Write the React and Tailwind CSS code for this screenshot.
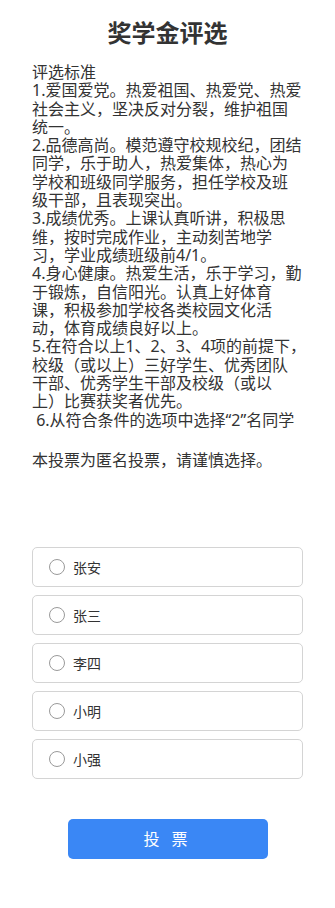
import React from "react";

const lines = [
  "评选标准",
  "1.爱国爱党。热爱祖国、热爱党、热爱",
  "社会主义，坚决反对分裂，维护祖国",
  "统一。",
  "2.品德高尚。模范遵守校规校纪，团结",
  "同学，乐于助人，热爱集体，热心为",
  "学校和班级同学服务，担任学校及班",
  "级干部，且表现突出。",
  "3.成绩优秀。上课认真听讲，积极思",
  "维，按时完成作业，主动刻苦地学",
  "习，学业成绩班级前4/1。",
  "4.身心健康。热爱生活，乐于学习，勤",
  "于锻炼，自信阳光。认真上好体育",
  "课，积极参加学校各类校园文化活",
  "动，体育成绩良好以上。",
  "5.在符合以上1、2、3、4项的前提下，",
  "校级（或以上）三好学生、优秀团队",
  "干部、优秀学生干部及校级（或以",
  "上）比赛获奖者优先。",
  " 6.从符合条件的选项中选择“2”名同学",
];

const options = ["张安", "张三", "李四", "小明", "小强"];

export default function App() {
  return (
    <div
      className="w-[335px] min-h-[908px] bg-white text-[#333333] px-8"
      style={{ fontFamily: '"Noto Sans", "Noto Sans CJK SC", sans-serif' }}
    >
      <h1 className="pt-[21px] text-center text-[24px] leading-[24px] font-bold text-[#333333]">
        奖学金评选
      </h1>
      <div className="mt-[18px] text-[16px] leading-[18.3px]">
        {lines.map((l, i) => (
          <div key={i} className="whitespace-pre">
            {l}
          </div>
        ))}
        <div className="mt-[22px] whitespace-pre">本投票为匿名投票，请谨慎选择。</div>
      </div>
      <div className="mt-[78px] flex flex-col gap-2">
        {options.map((o) => (
          <label
            key={o}
            className="flex h-10 items-center rounded-[5px] border border-[#d4d4d4] pl-[16px]"
          >
            <span className="h-[16px] w-[16px] rounded-full border border-[#9a9a9a]" />
            <span className="ml-[8px] text-[14px] text-[#333333]">{o}</span>
          </label>
        ))}
      </div>
      <div className="mt-[40px] flex justify-center">
        <button className="h-10 w-[200px] rounded-[5px] bg-[#3a87f5] text-[16px] tracking-[4px] text-white">
          投 票
        </button>
      </div>
    </div>
  );
}
